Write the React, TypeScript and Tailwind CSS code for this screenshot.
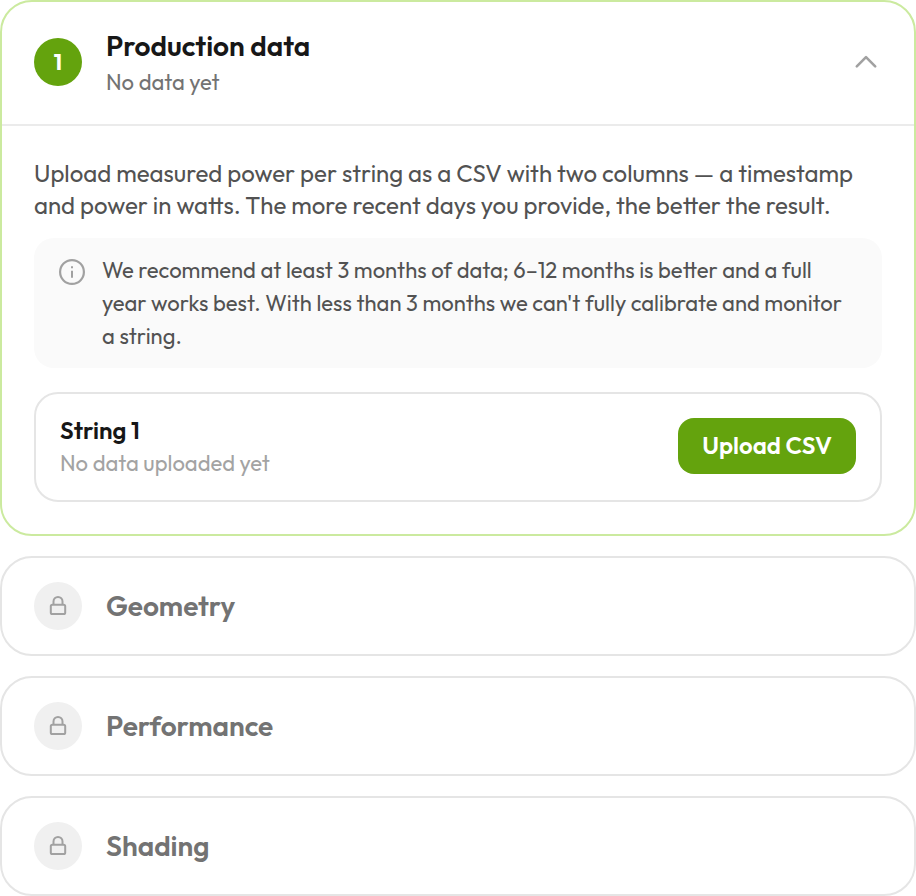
import React, { useState } from 'react';

const lockedSteps = ['Geometry', 'Performance', 'Shading'];

const ChevronIcon: React.FC<{ open: boolean }> = ({ open }) => (
  <svg
    viewBox="0 0 32 32"
    className={open ? 'w-8 h-8 shrink-0' : 'w-8 h-8 shrink-0 rotate-180'}
    fill="none"
    stroke="#a1a1a1"
    strokeWidth="2.6"
    strokeLinecap="round"
    strokeLinejoin="round"
    aria-hidden="true"
  >
    <path d="M6.8 20.3 16 11.1l9.2 9.2" />
  </svg>
);

const InfoIcon: React.FC = () => (
  <svg viewBox="0 0 28 28" className="w-7 h-7 shrink-0 mt-1" fill="none" stroke="#a1a1a1" aria-hidden="true">
    <circle cx="14" cy="14" r="11.9" strokeWidth="2.2" />
    <path d="M14 12.8v7" strokeWidth="2" />
    <path d="M14 8.2v2" strokeWidth="2" />
  </svg>
);

const LockIcon: React.FC = () => (
  <svg
    viewBox="0 0 24 24"
    className="w-6 h-6"
    fill="none"
    stroke="#a1a1a1"
    strokeWidth="2"
    strokeLinejoin="round"
    aria-hidden="true"
  >
    <rect x="4.8" y="10.7" width="14.4" height="9.4" rx="1.6" />
    <path d="M7.5 10.7V7.4a4.5 4.5 0 0 1 9 0v3.3" />
  </svg>
);

const LockedStep: React.FC<{ title: string }> = ({ title }) => (
  <section className="flex items-center gap-6 px-8 py-6 bg-white border-2 border-[#e5e5e5] rounded-[32px]">
    <div className="flex items-center justify-center w-12 h-12 rounded-full bg-[#f0f0f0]">
      <LockIcon />
    </div>
    <h2 className="text-[28px] leading-10 font-semibold text-[#737373]">{title}</h2>
  </section>
);

const App: React.FC = () => {
  const [open, setOpen] = useState(true);

  return (
    <main className="flex flex-col gap-5 bg-white font-[Outfit,Lato,sans-serif]">
      {/* Active step */}
      <section className="bg-white border-2 border-[#cbea9f] rounded-[32px]">
        <button
          type="button"
          aria-expanded={open}
          onClick={() => setOpen((prev) => !prev)}
          className="flex items-center gap-6 w-full px-8 pt-6 pb-[26px] text-left"
        >
          <span className="flex items-center justify-center w-12 h-12 rounded-full bg-[#64a30d] text-white text-[22px] font-bold">
            1
          </span>
          <span className="flex-1">
            <span className="block text-[28px] leading-10 font-semibold text-[#171717]">Production data</span>
            <span className="block text-[22px] leading-8 text-[#737373]">No data yet</span>
          </span>
          <ChevronIcon open={open} />
        </button>

        {open && (
          <div className="px-8 pt-[31px] pb-8 border-t-2 border-[#ebebeb]">
            <p className="text-2xl leading-8 text-[#525252]">
              Upload measured power per string as a CSV with two columns — a timestamp and power in watts. The more
              recent days you provide, the better the result.
            </p>

            {/* Data recommendation */}
            <div className="flex gap-4 mt-[17px] px-6 pt-4 pb-[15px] rounded-[20px] bg-[#fafafa]">
              <InfoIcon />
              <p className="text-[22px] leading-[33px] text-[#525252]">
                We recommend at least 3 months of data; 6–12 months is better and a full year works best. With less
                than 3 months we can't fully calibrate and monitor a string.
              </p>
            </div>

            {/* Upload row */}
            <div className="flex items-start justify-between gap-4 mt-6 px-6 py-5 border-2 border-[#e5e5e5] rounded-3xl">
              <div>
                <h3 className="text-2xl leading-[33px] font-semibold text-[#171717]">String 1</h3>
                <p className="text-[22px] leading-[33px] text-[#a3a3a3]">No data uploaded yet</p>
              </div>
              <button
                type="button"
                className="h-14 mt-1 px-6 pb-0.5 rounded-2xl bg-[#64a30d] text-white text-2xl font-semibold whitespace-nowrap"
              >
                Upload CSV
              </button>
            </div>
          </div>
        )}
      </section>

      {lockedSteps.map((title) => (
        <LockedStep key={title} title={title} />
      ))}
    </main>
  );
};

export default App;
